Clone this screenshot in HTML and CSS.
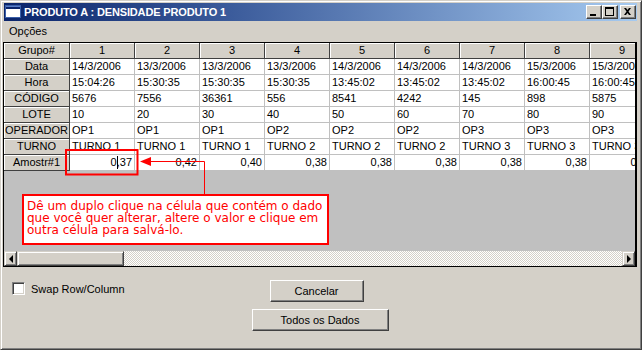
FILE: index.html
```html
<!DOCTYPE html>
<html lang="pt">
<head>
<meta charset="utf-8">
<title>PRODUTO A : DENSIDADE PRODUTO 1</title>
<link rel="stylesheet" href="styles.css">
</head>
<body>
<div class="window">
  <div class="titlebar">
    <svg class="appicon" width="16" height="14" viewBox="0 0 16 14">
      <rect x="0.5" y="0.5" width="15" height="12" fill="#fff" stroke="#3a5fa8"/>
      <rect x="1" y="1" width="14" height="3" fill="#0a246a"/>
      <rect x="1" y="1" width="14" height="1" fill="#5a7ec8"/>
    </svg>
    <span class="title">PRODUTO A : DENSIDADE PRODUTO 1</span>
    <div class="ctrls">
      <span class="cbtn"><svg width="14" height="12" viewBox="0 0 14 12"><rect x="3" y="8" width="6" height="2" fill="#000"/></svg></span>
      <span class="cbtn"><svg width="14" height="12" viewBox="0 0 14 12"><rect x="2.5" y="1.5" width="8" height="8" fill="none" stroke="#000"/><rect x="2" y="1" width="9" height="2" fill="#000"/></svg></span>
      <span class="cbtn close"><svg width="14" height="12" viewBox="0 0 14 12"><path d="M3 2h2l1.5 2 1.5-2h2l-2.5 3.5 2.5 3.5h-2l-1.5-2-1.5 2h-2l2.5-3.5z" fill="#000"/></svg></span>
    </div>
  </div>
  <div class="menubar"><span class="menu">Opções</span></div>
  <div class="grid">
    <div class="table">
      <div class="c hd">Grupo#</div><div class="c hd">1</div><div class="c hd">2</div><div class="c hd">3</div><div class="c hd">4</div><div class="c hd">5</div><div class="c hd">6</div><div class="c hd">7</div><div class="c hd">8</div><div class="c hd">9</div>
      <div class="c hd">Data</div><div class="c">14/3/2006</div><div class="c">13/3/2006</div><div class="c">13/3/2006</div><div class="c">13/3/2006</div><div class="c">14/3/2006</div><div class="c">14/3/2006</div><div class="c">14/3/2006</div><div class="c">15/3/2006</div><div class="c">15/3/2006</div>
      <div class="c hd">Hora</div><div class="c">15:04:26</div><div class="c">15:30:35</div><div class="c">15:30:35</div><div class="c">15:30:35</div><div class="c">13:45:02</div><div class="c">13:45:02</div><div class="c">13:45:02</div><div class="c">16:00:45</div><div class="c">16:00:45</div>
      <div class="c hd">CÓDIGO</div><div class="c">5676</div><div class="c">7556</div><div class="c">36361</div><div class="c">556</div><div class="c">8541</div><div class="c">4242</div><div class="c">145</div><div class="c">898</div><div class="c">5875</div>
      <div class="c hd">LOTE</div><div class="c">10</div><div class="c">20</div><div class="c">30</div><div class="c">40</div><div class="c">50</div><div class="c">60</div><div class="c">70</div><div class="c">80</div><div class="c">90</div>
      <div class="c hd">OPERADOR</div><div class="c">OP1</div><div class="c">OP1</div><div class="c">OP1</div><div class="c">OP2</div><div class="c">OP2</div><div class="c">OP2</div><div class="c">OP3</div><div class="c">OP3</div><div class="c">OP3</div>
      <div class="c hd">TURNO</div><div class="c">TURNO 1</div><div class="c">TURNO 1</div><div class="c">TURNO 1</div><div class="c">TURNO 2</div><div class="c">TURNO 2</div><div class="c">TURNO 2</div><div class="c">TURNO 3</div><div class="c">TURNO 3</div><div class="c">TURNO 3</div>
      <div class="c hd">Amostr#1</div><div class="c num">0<span class="caret"></span>,37</div><div class="c num">0,42</div><div class="c num">0,40</div><div class="c num">0,38</div><div class="c num">0,38</div><div class="c num">0,38</div><div class="c num">0,38</div><div class="c num">0,38</div><div class="c num">0,38</div>
    </div>
    <div class="empty"></div>
    <div class="hscroll">
      <div class="sbtn"><span class="arr left"></span></div>
      <div class="thumb"></div>
      <div class="track"></div>
      <div class="sbtn"><span class="arr right"></span></div>
    </div>
  </div>
  <div class="bottom">
    <label class="chk"><span class="box"></span><span>Swap Row/Column</span></label>
    <div class="buttons">
      <button class="btn cancel">Cancelar</button>
      <button class="btn all">Todos os Dados</button>
    </div>
    <div></div>
  </div>

  <svg class="annot" width="642" height="350" viewBox="0 0 642 350">
    <rect x="66" y="150" width="71.5" height="24.5" fill="none" stroke="#ff0000" stroke-width="2"/>
    <polygon points="140,161.5 151,157 151,166" fill="#ff0000"/>
    <path d="M150 161.5H204.5V194" fill="none" stroke="#ff0000" stroke-width="1"/>
  </svg>
  <div class="note">Dê um duplo clique na célula que contém o dado que você quer alterar, altere o valor e clique em outra célula para salvá-lo.</div>
</div>
</body>
</html>
```

FILE: styles.css
```css
body {
  margin: 0;
  background: #d4d0c8;
  font-family: "Liberation Sans", Arial, sans-serif;
  font-size: 11px;
  color: #000;
}

.window {
  position: relative;
  width: 642px;
  height: 350px;
  box-sizing: border-box;
  border: 1px solid;
  border-color: #d4d0c8 #404040 #404040 #d4d0c8;
  box-shadow: inset 1px 1px #fff, inset -1px -1px #808080;
  padding: 2px 4px 2px 2px;
  display: flex;
  flex-direction: column;
  background: #d4d0c8;
  overflow: hidden;
}

.titlebar {
  height: 18px;
  margin-left: 1px;
  display: flex;
  align-items: center;
  background: linear-gradient(to right, #0a246a 0%, #3a5a9a 35%, #a6caf0 100%);
  flex: none;
}

.appicon {
  margin-left: 1px;
  flex: none;
}

.title {
  margin-left: 3px;
  color: #fff;
  font-weight: bold;
  font-size: 11px;
  letter-spacing: -0.15px;
  white-space: nowrap;
}

.ctrls {
  margin-left: auto;
  margin-right: 1px;
  display: flex;
}

.cbtn {
  width: 16px;
  height: 14px;
  box-sizing: border-box;
  background: #d4d0c8;
  border: 1px solid;
  border-color: #fff #404040 #404040 #fff;
  box-shadow: inset -1px -1px #808080;
  display: flex;
}

.cbtn svg {
  display: block;
}

.cbtn.close {
  margin-left: 2px;
}

.menubar {
  height: 20px;
  box-sizing: border-box;
  padding: 1px 0 0 6px;
  line-height: 19px;
  flex: none;
}

.grid {
  margin-top: 1px;
  height: 225px;
  box-sizing: border-box;
  border: 1px solid #000;
  border-right-width: 2px;
  background: #c0c0c0;
  display: flex;
  flex-direction: column;
  overflow: hidden;
  flex: none;
}

.table {
  display: grid;
  grid-template-columns: 66px repeat(9, 65px);
  grid-auto-rows: 16px;
  width: 651px;
  background: #fff;
  flex: none;
}

.c {
  box-sizing: border-box;
  border-right: 1px solid #c0c0c0;
  border-bottom: 1px solid #c0c0c0;
  padding: 0 0 0 2px;
  line-height: 15px;
  white-space: nowrap;
  overflow: hidden;
}

.hd {
  background: #d4d0c8;
  text-align: center;
  padding: 0;
  border-right-color: #404040;
  border-bottom-color: #404040;
  box-shadow: inset 1px 1px #fff;
}

.num {
  text-align: right;
  padding: 0 2px 0 0;
}

.caret {
  display: inline-block;
  width: 1px;
  height: 13px;
  background: #000;
  vertical-align: -3px;
  margin-right: -1px;
}

.empty {
  flex: 1;
}

.hscroll {
  height: 15px;
  display: flex;
  flex: none;
}

.sbtn,
.thumb {
  box-sizing: border-box;
  background: #d4d0c8;
  border: 1px solid;
  border-color: #d4d0c8 #404040 #404040 #d4d0c8;
  box-shadow: inset 1px 1px #fff, inset -1px -1px #808080;
}

.sbtn {
  width: 13px;
  display: flex;
  align-items: center;
  justify-content: center;
}

.thumb {
  width: 107px;
}

.track {
  flex: 1;
  background-color: #fff;
  background-image: repeating-conic-gradient(#d4d0c8 0 25%, #fff 0 50%);
  background-size: 2px 2px;
}

.arr {
  width: 0;
  height: 0;
  border-top: 4px solid transparent;
  border-bottom: 4px solid transparent;
}

.arr.left {
  border-right: 4px solid #000;
}

.arr.right {
  border-left: 4px solid #000;
}

.bottom {
  flex: 1;
  display: grid;
  grid-template-columns: 1fr 137px 1fr;
  align-items: start;
  padding-top: 13px;
}

.chk {
  display: flex;
  align-items: center;
  margin: 2px 0 0 9px;
}

.box {
  width: 13px;
  height: 13px;
  box-sizing: border-box;
  background: #fff;
  border: 1px solid;
  border-color: #808080 #fff #fff #808080;
  box-shadow: inset 1px 1px #404040, inset -1px -1px #d4d0c8;
  margin-right: 6px;
}

.buttons {
  display: flex;
  flex-direction: column;
}

.btn {
  height: 22px;
  box-sizing: border-box;
  background: #d4d0c8;
  border: 1px solid;
  border-color: #fff #404040 #404040 #fff;
  box-shadow: inset -1px -1px #808080;
  font-family: "Liberation Sans", Arial, sans-serif;
  font-size: 11px;
  color: #000;
  padding: 0;
}

.btn.cancel {
  width: 94px;
  margin-left: 18px;
}

.btn.all {
  width: 137px;
  margin-top: 7px;
}

.annot {
  position: absolute;
  left: -1px;
  top: -1px;
  pointer-events: none;
}

.note {
  position: absolute;
  left: 21px;
  top: 193px;
  width: 307px;
  height: 51px;
  box-sizing: border-box;
  border: 2px solid #ff0000;
  background: #fff;
  color: #ff0000;
  font-family: "DejaVu Sans", Verdana, sans-serif;
  font-size: 12px;
  line-height: 12px;
  padding: 4px 0 0 3px;
}
```
